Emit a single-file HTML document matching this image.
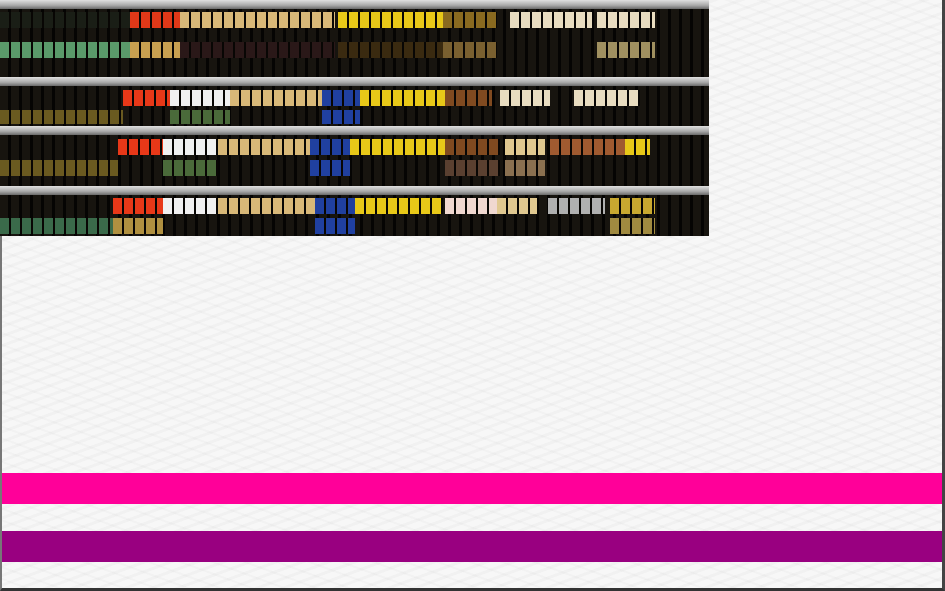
<!DOCTYPE html>
<html><head><meta charset="utf-8"><style>
html,body{margin:0;padding:0}
body{width:945px;height:591px;position:relative;overflow:hidden;background:#f7f7f7;
background-image:repeating-linear-gradient(160deg,rgba(0,0,0,.025) 0 3px,transparent 3px 9px),repeating-linear-gradient(20deg,rgba(0,0,0,.02) 0 2px,transparent 2px 11px);}
.edge{position:absolute;left:0;top:0;width:945px;height:591px;border-left:2px solid #777;border-right:3px solid #444;border-bottom:3px solid #333;box-sizing:border-box}
#shelf{position:absolute;left:0;top:0;width:709px;height:236px;background:#0a0806;overflow:hidden;z-index:2}
.bar{position:absolute;left:0;width:709px;background:linear-gradient(#e0e0e0,#a8a8a8 60%,#6a6a6a);z-index:3}
.row{position:absolute;left:0;width:709px;overflow:hidden}
.s{position:absolute;top:0;height:100%;background:repeating-linear-gradient(90deg,var(--c) 0 9px,#080604 9px 11px)}
.b{position:absolute;left:0;width:709px;background:repeating-linear-gradient(90deg,#17140f 0 8px,#050403 8px 11px)}
.pink{position:absolute;left:0;top:473px;width:945px;height:31px;background:#ff0099}
.purp{position:absolute;left:0;top:531px;width:945px;height:31px;background:#990080}
</style></head><body>
<div id="shelf">
<div class="b" style="top:8px;height:70px"></div>
<div class="b" style="top:86px;height:41px"></div>
<div class="b" style="top:135px;height:52px"></div>
<div class="b" style="top:195px;height:41px"></div>
<div class="bar" style="top:0;height:9px"></div>
<div class="bar" style="top:77px;height:9px"></div>
<div class="bar" style="top:126px;height:9px"></div>
<div class="bar" style="top:186px;height:9px"></div>

<div class="row" style="top:12px;height:16px">
<div class="s" style="left:0;width:130px;--c:#1a1e16"></div>
<div class="s" style="left:130px;width:50px;--c:#e03818"></div>
<div class="s" style="left:180px;width:155px;--c:#d8b878"></div>
<div class="s" style="left:338px;width:105px;--c:#e8c818"></div>
<div class="s" style="left:443px;width:54px;--c:#8a6a20"></div>
<div class="s" style="left:510px;width:82px;--c:#e8dcc0"></div>
<div class="s" style="left:597px;width:58px;--c:#e8dcc0"></div>
</div>
<div class="row" style="top:42px;height:16px">
<div class="s" style="left:0;width:130px;--c:#5a9a6a"></div>
<div class="s" style="left:130px;width:50px;--c:#c8a050"></div>
<div class="s" style="left:180px;width:155px;--c:#2a1818"></div>
<div class="s" style="left:338px;width:105px;--c:#3a2a10"></div>
<div class="s" style="left:443px;width:54px;--c:#7a6030"></div>
<div class="s" style="left:597px;width:58px;--c:#a09060"></div>
</div>
<div class="row" style="top:90px;height:16px">
<div class="s" style="left:123px;width:47px;--c:#e83818"></div>
<div class="s" style="left:170px;width:60px;--c:#f0f0f0"></div>
<div class="s" style="left:230px;width:92px;--c:#d8b878"></div>
<div class="s" style="left:322px;width:38px;--c:#2040a0"></div>
<div class="s" style="left:360px;width:85px;--c:#e8c818"></div>
<div class="s" style="left:445px;width:47px;--c:#804a20"></div>
<div class="s" style="left:500px;width:50px;--c:#e8dcc0"></div>
<div class="s" style="left:574px;width:66px;--c:#e8dcc0"></div>
</div>
<div class="row" style="top:110px;height:14px">
<div class="s" style="left:0;width:123px;--c:#6a5a20"></div>
<div class="s" style="left:170px;width:60px;--c:#4a6a3a"></div>
<div class="s" style="left:322px;width:38px;--c:#2040a0"></div>
</div>
<div class="row" style="top:139px;height:16px">
<div class="s" style="left:118px;width:45px;--c:#e83818"></div>
<div class="s" style="left:163px;width:55px;--c:#f0f0f0"></div>
<div class="s" style="left:218px;width:92px;--c:#d8b878"></div>
<div class="s" style="left:310px;width:40px;--c:#2040a0"></div>
<div class="s" style="left:350px;width:95px;--c:#e8c818"></div>
<div class="s" style="left:445px;width:55px;--c:#804a20"></div>
<div class="s" style="left:505px;width:40px;--c:#e0c890"></div>
<div class="s" style="left:550px;width:75px;--c:#a05a30"></div>
<div class="s" style="left:625px;width:25px;--c:#e8c818"></div>
</div>
<div class="row" style="top:160px;height:16px">
<div class="s" style="left:0;width:118px;--c:#6a5a20"></div>
<div class="s" style="left:163px;width:55px;--c:#4a6a3a"></div>
<div class="s" style="left:310px;width:40px;--c:#2040a0"></div>
<div class="s" style="left:445px;width:55px;--c:#5a4030"></div>
<div class="s" style="left:505px;width:40px;--c:#8a7050"></div>
</div>
<div class="row" style="top:198px;height:16px">
<div class="s" style="left:113px;width:50px;--c:#e83818"></div>
<div class="s" style="left:163px;width:55px;--c:#f0f0f0"></div>
<div class="s" style="left:218px;width:97px;--c:#d8b878"></div>
<div class="s" style="left:315px;width:40px;--c:#2040a0"></div>
<div class="s" style="left:355px;width:88px;--c:#e8c818"></div>
<div class="s" style="left:445px;width:52px;--c:#f0d8d0"></div>
<div class="s" style="left:497px;width:40px;--c:#e0c890"></div>
<div class="s" style="left:548px;width:57px;--c:#b0b0b0"></div>
<div class="s" style="left:610px;width:45px;--c:#c8a830"></div>
</div>
<div class="row" style="top:218px;height:16px">
<div class="s" style="left:0;width:113px;--c:#3a6a4a"></div>
<div class="s" style="left:113px;width:50px;--c:#b09040"></div>
<div class="s" style="left:315px;width:40px;--c:#2040a0"></div>
<div class="s" style="left:610px;width:45px;--c:#a08a40"></div>
</div>
</div>
<div class="pink"></div>
<div class="purp"></div>
<div class="edge"></div>
</body></html>
